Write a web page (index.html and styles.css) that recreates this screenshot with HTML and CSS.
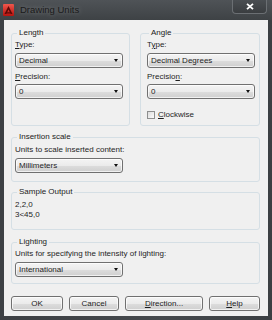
FILE: index.html
```html
<!DOCTYPE html>
<html lang="en">
<head>
    <meta charset="UTF-8">
    <title>Drawing Units</title>
    <link rel="stylesheet" href="styles.css">
</head>
<body>
    <div class="window">
        <div class="titlebar">
            <svg class="app-icon" width="11" height="12" viewBox="0 0 11 12">
                <defs>
                    <linearGradient id="red" x1="0" y1="0" x2="0" y2="1">
                        <stop offset="0" stop-color="#f0574c"/>
                        <stop offset="1" stop-color="#b5130f"/>
                    </linearGradient>
                </defs>
                <rect x="0" y="0" width="11" height="12" rx="1" fill="url(#red)"/>
                <path d="M5.5 2 L9.5 10 L7.6 10 L5.5 5.6 L3.4 10 L1.5 10 Z" fill="#5c0907"/>
                <path d="M4.2 8.2 L6.8 8.2 L7.4 9.4 L3.6 9.4 Z" fill="#5c0907"/>
            </svg>
            <span class="title">Drawing Units</span>
            <div class="close">
                <svg width="8" height="7" viewBox="0 0 8 7">
                    <path d="M1 0.8 L7 6.2 M7 0.8 L1 6.2" stroke="#fff" stroke-width="1.8"/>
                </svg>
            </div>
        </div>

        <div class="dialog">
            <div class="row">
                <fieldset class="group group-length">
                    <legend>Length</legend>
                    <label class="field-label"><u>T</u>ype:</label>
                    <div class="combo combo-first"><span>Decimal</span><i class="arrow"></i></div>
                    <label class="field-label field-label-second"><u>P</u>recision:</label>
                    <div class="combo"><span>0</span><i class="arrow"></i></div>
                </fieldset>

                <fieldset class="group group-angle">
                    <legend>Angle</legend>
                    <label class="field-label">T<u>y</u>pe:</label>
                    <div class="combo combo-first"><span>Decimal Degrees</span><i class="arrow"></i></div>
                    <label class="field-label field-label-second">Precisio<u>n</u>:</label>
                    <div class="combo"><span>0</span><i class="arrow"></i></div>
                    <div class="check-row">
                        <span class="checkbox"></span>
                        <span><u>C</u>lockwise</span>
                    </div>
                </fieldset>
            </div>

            <fieldset class="group group-insertion">
                <legend>Insertion scale</legend>
                <label class="field-label">Units to scale inserted content:</label>
                <div class="combo"><span>Millimeters</span><i class="arrow"></i></div>
            </fieldset>

            <fieldset class="group group-sample">
                <legend>Sample Output</legend>
                <div class="sample-line">2,2,0</div>
                <div class="sample-line">3&lt;45,0</div>
            </fieldset>

            <fieldset class="group group-lighting">
                <legend>Lighting</legend>
                <label class="field-label">Units for specifying the intensity of lighting:</label>
                <div class="combo"><span>International</span><i class="arrow"></i></div>
            </fieldset>

            <div class="buttons">
                <button class="btn btn-ok">OK</button>
                <button class="btn btn-cancel">Cancel</button>
                <button class="btn btn-direction"><u>D</u>irection...</button>
                <button class="btn btn-help"><u>H</u>elp</button>
            </div>
        </div>
    </div>
</body>
</html>
```

FILE: styles.css
```css
body {
    margin: 0;
    font-family: 'Liberation Sans', Arial, sans-serif;
    font-size: 8px;
    line-height: 10px;
    color: #1e1e1e;
    background-color: #3a3d40;
}

.window {
    width: 272px;
    height: 320px;
    display: flex;
    flex-direction: column;
    background: linear-gradient(to right, #3d4044, #45494d 60%, #3b3f42);
}

.titlebar {
    height: 20px;
    display: flex;
    align-items: flex-start;
    background: linear-gradient(to bottom, #4f5357, #3e4245);
}

.app-icon {
    margin: 4px 0 0 3px;
}

.title {
    margin: 4px 0 0 6px;
    font-size: 9.5px;
    line-height: 12px;
    color: #1a1a1a;
    text-shadow: 0 0 5px rgba(255, 255, 255, 0.35);
}

.close {
    margin-left: auto;
    margin-right: 5px;
    width: 35px;
    height: 14px;
    display: flex;
    align-items: center;
    justify-content: center;
    border: 1px solid #6b6f73;
    border-top: none;
    border-radius: 0 0 4px 4px;
    background: linear-gradient(to bottom, #4a4e52, #3a3d40);
    box-sizing: border-box;
}

.dialog {
    flex: 1;
    margin: 0 4px 4px 4px;
    padding: 8px 8px 5px 7px;
    background-color: #f0f0f0;
    display: flex;
    flex-direction: column;
}

.row {
    display: flex;
    gap: 10px;
}

.group {
    margin: 0;
    padding: 2px 5px 5px 3px;
    border: 1px solid #d5dfe5;
    border-radius: 3px;
    min-width: 0;
}

.group legend {
    padding: 0 2px;
    margin-left: 2px;
    line-height: 10px;
    color: #222;
}

.group-length {
    width: 119px;
    box-sizing: border-box;
}

.group-angle {
    flex: 1;
    padding-left: 6px;
}

.group-insertion {
    margin-top: 6px;
    padding-top: 3px;
    padding-bottom: 8px;
}

.group-sample {
    margin-top: 5px;
    padding-top: 3px;
    padding-bottom: 9px;
}

.group-lighting {
    margin-top: 7px;
    padding-bottom: 6px;
}

.field-label {
    display: block;
    margin-bottom: 3px;
}

.field-label-second {
    margin-top: 4px;
    margin-bottom: 2px;
}

.combo {
    width: 108px;
    height: 15px;
    box-sizing: border-box;
    display: flex;
    align-items: center;
    padding: 0 4px 0 3px;
    border: 1px solid #707070;
    border-radius: 3px;
    background: linear-gradient(to bottom, #f4f4f4 0%, #ebebeb 50%, #dddddd 51%, #cfcfcf 100%);
    box-shadow: inset 0 0 0 1px rgba(255, 255, 255, 0.7);
}

.combo span {
    flex: 1;
}

.arrow {
    width: 0;
    height: 0;
    border-left: 2.5px solid transparent;
    border-right: 2.5px solid transparent;
    border-top: 3px solid #111;
}

.check-row {
    margin-top: 11px;
    display: flex;
    align-items: center;
    gap: 3px;
    margin-left: 0;
}

.checkbox {
    width: 8px;
    height: 8px;
    box-sizing: border-box;
    border: 1px solid #8e8f8f;
    background: linear-gradient(to bottom right, #dcdcdc, #fbfbfb);
}

.sample-line {
    line-height: 10px;
}

.buttons {
    margin-top: 12px;
    display: flex;
    justify-content: space-between;
}

.btn {
    height: 15px;
    padding: 0;
    font-family: inherit;
    font-size: 8px;
    line-height: 10px;
    color: #1e1e1e;
    border: 1px solid #707070;
    border-radius: 3px;
    background: linear-gradient(to bottom, #f4f4f4 0%, #ebebeb 50%, #dddddd 51%, #cfcfcf 100%);
    box-shadow: inset 0 0 0 1px rgba(255, 255, 255, 0.7);
}

.btn-ok { width: 52px; }
.btn-cancel { width: 50px; }
.btn-direction { width: 78px; }
.btn-help { width: 51px; }
```
